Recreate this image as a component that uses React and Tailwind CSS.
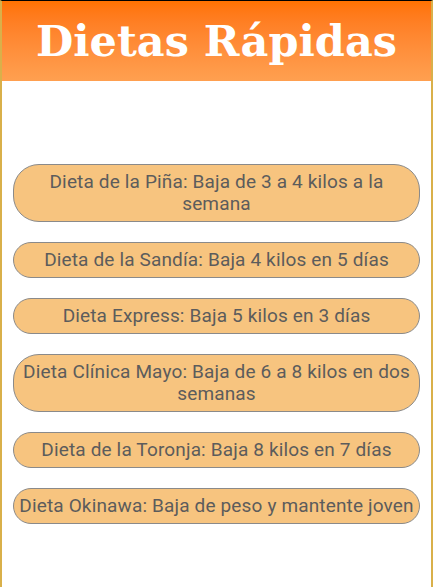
import React from "react";

const items = [
  "Dieta de la Piña: Baja de 3 a 4 kilos a la semana",
  "Dieta de la Sandía: Baja 4 kilos en 5 días",
  "Dieta Express: Baja 5 kilos en 3 días",
  "Dieta Clínica Mayo: Baja de 6 a 8 kilos en dos semanas",
  "Dieta de la Toronja: Baja 8 kilos en 7 días",
  "Dieta Okinawa: Baja de peso y mantente joven",
];

export default function App() {
  return (
    <div className="w-[433px] min-h-[587px] bg-white border-t border-t-black border-x-2 border-x-[#d9b04a] flex flex-col">
      <div className="h-[80px] bg-gradient-to-b from-[#ff7200] to-[#ffa050] flex items-center justify-center">
        <h1
          className="text-white font-bold text-[43px] leading-none"
          style={{ fontFamily: '"DejaVu Serif", serif' }}
        >
          Dietas Rápidas
        </h1>
      </div>
      <div
        className="flex flex-col gap-5 pt-[83px] px-[11px]"
        style={{ fontFamily: "Roboto, sans-serif" }}
      >
        {items.map((t) => (
          <div
            key={t}
            className="bg-[#f7c47f] border border-[#8a8a8a] rounded-[26px] py-1.5 px-1 text-center text-[19px] leading-[22px] tracking-[0.15px] text-[#5c5c5c]"
          >
            {t}
          </div>
        ))}
      </div>
    </div>
  );
}
